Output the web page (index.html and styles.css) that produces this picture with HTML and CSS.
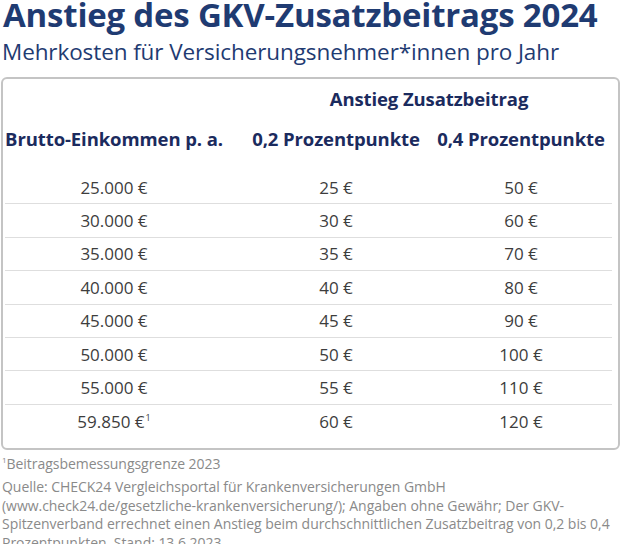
FILE: index.html
```html
<!DOCTYPE html>
<html lang="de">
<head>
<meta charset="utf-8">
<title>Anstieg des GKV-Zusatzbeitrags 2024</title>
<link rel="stylesheet" href="styles.css">
</head>
<body>
<div class="page">
  <h1 class="title">Anstieg des GKV-Zusatzbeitrags 2024</h1>
  <p class="subtitle">Mehrkosten für Versicherungsnehmer*innen pro Jahr</p>
  <div class="box">
    <div class="table">
      <div class="row head-top">
        <div class="cell c1"></div>
        <div class="cell span"><span>Anstieg Zusatzbeitrag</span></div>
      </div>
      <div class="row head">
        <div class="cell c1"><span>Brutto-Einkommen p. a.</span></div>
        <div class="cell c2"><span>0,2 Prozentpunkte</span></div>
        <div class="cell c3"><span>0,4 Prozentpunkte</span></div>
      </div>
      <div class="row data"><div class="cell c1"><span>25.000 €</span></div><div class="cell c2"><span>25 €</span></div><div class="cell c3"><span>50 €</span></div></div>
      <div class="row data"><div class="cell c1"><span>30.000 €</span></div><div class="cell c2"><span>30 €</span></div><div class="cell c3"><span>60 €</span></div></div>
      <div class="row data"><div class="cell c1"><span>35.000 €</span></div><div class="cell c2"><span>35 €</span></div><div class="cell c3"><span>70 €</span></div></div>
      <div class="row data"><div class="cell c1"><span>40.000 €</span></div><div class="cell c2"><span>40 €</span></div><div class="cell c3"><span>80 €</span></div></div>
      <div class="row data"><div class="cell c1"><span>45.000 €</span></div><div class="cell c2"><span>45 €</span></div><div class="cell c3"><span>90 €</span></div></div>
      <div class="row data"><div class="cell c1"><span>50.000 €</span></div><div class="cell c2"><span>50 €</span></div><div class="cell c3"><span>100 €</span></div></div>
      <div class="row data"><div class="cell c1"><span>55.000 €</span></div><div class="cell c2"><span>55 €</span></div><div class="cell c3"><span>110 €</span></div></div>
      <div class="row data last"><div class="cell c1"><span>59.850 €<sup class="fn">1</sup></span></div><div class="cell c2"><span>60 €</span></div><div class="cell c3"><span>120 €</span></div></div>
    </div>
  </div>
  <div class="notes">
    <p class="note1"><sup class="fnb">1</sup>Beitragsbemessungsgrenze 2023</p>
    <p class="source">Quelle: CHECK24 Vergleichsportal für Krankenversicherungen GmbH<br>(www.check24.de/gesetzliche-krankenversicherung/); Angaben ohne Gewähr; Der GKV-<br>Spitzenverband errechnet einen Anstieg beim durchschnittlichen Zusatzbeitrag von 0,2 bis 0,4<br>Prozentpunkten. Stand: 13.6.2023</p>
  </div>
</div>
</body>
</html>
```

FILE: styles.css
```css
html, body {
  margin: 0;
  padding: 0;
  background: #ffffff;
}

body {
  font-family: "Open Sans", "Noto Sans", "Liberation Sans", sans-serif;
  width: 621px;
  height: 544px;
  overflow: hidden;
}

.page {
  display: flex;
  flex-direction: column;
}

.title {
  margin: 0;
  padding: 0 0 0 3px;
  font-size: 33px;
  font-weight: 700;
  line-height: 30px;
  color: #1f3b72;
  letter-spacing: -0.2px;
  white-space: nowrap;
}

.subtitle {
  margin: 7px 0 0 0;
  padding: 0 0 0 2px;
  font-size: 22.5px;
  font-weight: 400;
  line-height: 30px;
  color: #1f3b72;
  letter-spacing: -0.1px;
  white-space: nowrap;
}

.box {
  margin: 10px 1px 0 1px;
  height: 369px;
  border: 2px solid #c4c4c4;
  border-radius: 6px;
  box-sizing: content-box;
}

.table {
  display: flex;
  flex-direction: column;
  margin: 0 6px 0 2px;
}

.row {
  display: flex;
}

.cell {
  display: flex;
  justify-content: center;
  align-items: center;
  white-space: nowrap;
}

.c1 { width: 218px; flex: none; }
.c2 { width: 226px; flex: none; }
.c3 { width: 144px; flex: none; }
.span {
  width: 328px;
  padding-left: 42px;
  flex: none;
}

.head-top {
  height: 42px;
}

.head-top .cell,
.head .cell {
  font-weight: 700;
  font-size: 18.5px;
  color: #1b2b5e;
  letter-spacing: -0.1px;
}

.head-top .span span {
  padding-bottom: 3px;
}

.head {
  height: 50px;
  align-items: flex-start;
}

.head .cell {
  height: 35px;
}

.data {
  border-bottom: 1.5px solid #dedede;
  box-sizing: border-box;
  height: 33.4px;
}

.data .cell {
  font-size: 17px;
  color: #3d3d3d;
  letter-spacing: 0;
}

.data.last {
  border-bottom: none;
}

.fn {
  font-size: 9px;
  line-height: 0;
  vertical-align: 7px;
  margin-left: 1px;
}

.notes {
  padding: 4px 0 0 2px;
  color: #8a8a8a;
  font-size: 14px;
  letter-spacing: -0.04px;
}

.notes p {
  margin: 0;
  white-space: nowrap;
}

.note1 {
  line-height: 20px;
  margin-bottom: 4px !important;
}

.fnb {
  font-size: 8px;
  line-height: 0;
  vertical-align: 6px;
}

.source {
  line-height: 18.5px;
}
```
